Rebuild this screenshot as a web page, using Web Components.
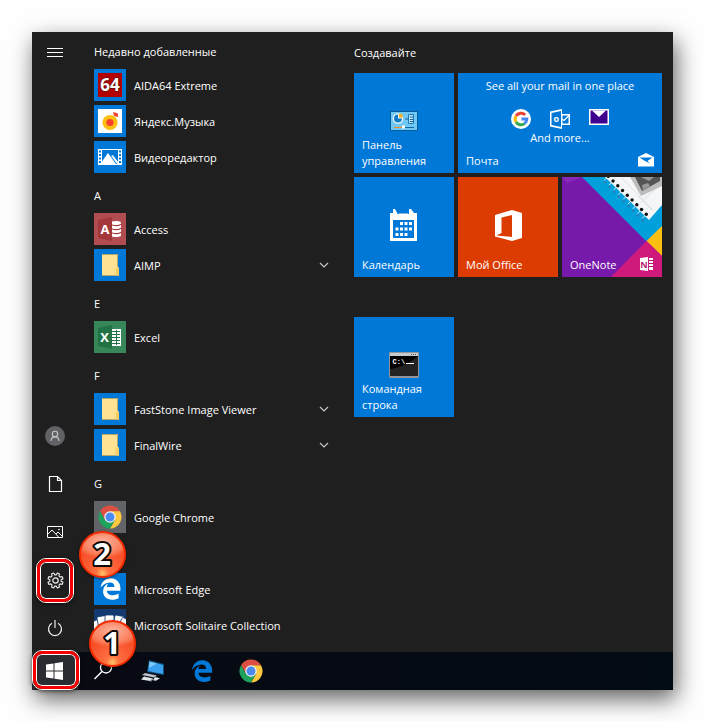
<!DOCTYPE html>
<html lang="ru">
<head>
<meta charset="utf-8">
<meta name="viewport" content="width=device-width, initial-scale=1">
<title>Меню «Пуск»</title>
<style>
  body { margin: 0; background: #fefefe; color: #fff; font: 11px/16px "Open Sans", "Noto Sans", sans-serif; }
</style>
</head>
<body>
<start-window>
  <nav-rail slot="rail">
    <rail-button icon="menu" label="Развернуть"></rail-button>
    <rail-button slot="bottom" icon="user" label="Учетная запись"></rail-button>
    <rail-button slot="bottom" icon="doc" label="Документы"></rail-button>
    <rail-button slot="bottom" icon="photo" label="Изображения"></rail-button>
    <rail-button slot="bottom" icon="gear" label="Параметры">
      <focus-frame class="gear"></focus-frame>
      <step-badge class="gear" value="2"></step-badge>
    </rail-button>
    <rail-button slot="bottom" icon="power" label="Выключение"></rail-button>
  </nav-rail>

  <app-list slot="apps">
    <list-heading>Недавно добавленные</list-heading>
    <app-row icon="aida">AIDA64 Extreme</app-row>
    <app-row icon="music">Яндекс.Музыка</app-row>
    <app-row icon="video">Видеоредактор</app-row>
    <list-heading>A</list-heading>
    <app-row icon="access">Access</app-row>
    <app-row icon="folder" group>AIMP</app-row>
    <list-heading>E</list-heading>
    <app-row icon="excel">Excel</app-row>
    <list-heading>F</list-heading>
    <app-row icon="folder" group>FastStone Image Viewer</app-row>
    <app-row icon="folder" group>FinalWire</app-row>
    <list-heading>G</list-heading>
    <app-row icon="chromeTile">Google Chrome</app-row>
    <list-heading></list-heading>
    <app-row icon="edgeTile">Microsoft Edge</app-row>
    <app-row icon="cards">Microsoft Solitaire Collection</app-row>
  </app-list>

  <tile-area slot="tiles">
    <tile-group heading="Создавайте">
      <start-tile icon="control">Панель<br>управления</start-tile>
      <mail-tile></mail-tile>
      <start-tile icon="calendar">Календарь</start-tile>
      <start-tile icon="office" class="orange">Мой Office</start-tile>
      <start-tile icon="onenoteArt" class="art">OneNote</start-tile>
    </tile-group>
    <tile-group>
      <start-tile icon="cmd">Командная<br>строка</start-tile>
    </tile-group>
  </tile-area>

  <task-bar slot="taskbar">
    <task-button icon="windows" label="Пуск" active>
      <focus-frame class="start"></focus-frame>
      <step-badge class="start" value="1"></step-badge>
    </task-button>
    <task-button icon="search" label="Поиск"></task-button>
    <task-button icon="computer" label="Компьютер"></task-button>
    <task-button icon="edge" label="Microsoft Edge"></task-button>
    <task-button icon="chrome" label="Google Chrome"></task-button>
  </task-bar>
</start-window>

<script>
const EDGE = 'M26 228C40.600 113 119 7.700 258.900 8c85 0 157.600 39.900 198.600 113.300 21 37.900 28.800 78.400 28.800 122.400v52H172.200c1.400 128.500 191.400 124.100 272.300 67.600v105.400c-47.400 28.500-156.800 53.200-240.200 21.300C133.700 462.900 84.400 389.500 83.600 318c-1.100-92.200 45.700-153.400 120.700-188.300-15.800 20-28 41.600-34.300 79h175.800c10.300-105-99.400-105-99.400-105C143.100 106.300 68.500 166.400 26 228z';

const gearPath = () => {
  const pts = [], n = 8;
  for (let i = 0; i < n; i++) {
    [[-14, 5.700], [-9, 7.700], [9, 7.700], [14, 5.700]].forEach(([d, r]) => {
      const a = (i * 45 + 22.500 + d) * Math.PI / 180;
      pts.push((8.500 + r * Math.cos(a)).toFixed(2) + ' ' + (8.500 + r * Math.sin(a)).toFixed(2));
    });
  }
  return 'M' + pts.join('L') + 'Z';
};

const chrome = (cx, cy, r) => {
  const p = (a, k) => (cx + k * r * Math.cos(a * Math.PI / 180)).toFixed(2) + ' ' + (cy + k * r * Math.sin(a * Math.PI / 180)).toFixed(2);
  return `<path fill="#dd4f43" d="M${p(210, 1)}A${r} ${r} 0 0 1 ${p(330, 1)}L${p(270, .5)}L${p(150, .5)}Z"/>
    <path fill="#fbc840" d="M${p(330, 1)}A${r} ${r} 0 0 1 ${p(90, 1)}L${p(30, .5)}L${p(270, .5)}Z"/>
    <path fill="#1fa25c" d="M${p(90, 1)}A${r} ${r} 0 0 1 ${p(210, 1)}L${p(150, .5)}L${p(30, .5)}Z"/>
    <circle cx="${cx}" cy="${cy}" r="${r * .5}" fill="#f2f2f2"/><circle cx="${cx}" cy="${cy}" r="${r * .39}" fill="#4a8af0"/>`;
};

/* Each entry: width, height, markup */
const ICONS = {
  menu: [17, 17, '<path d="M0 4.500h16M0 8.500h16M0 12.500h16" stroke="#fff"/>'],
  user: [20, 20, '<circle cx="10" cy="10" r="10" fill="#616265"/><g fill="none" stroke="#c8c8c8" stroke-width="1.100"><circle cx="10" cy="8" r="2.700"/><path d="M6 15c0-5.500 8-5.500 8 0"/></g>'],
  doc: [15, 18, '<path d="M1.500 1.500h8l4 4v11h-12zM9.500 1.500v4h4" fill="none" stroke="#fff" stroke-width="1.200"/>'],
  photo: [17, 13, '<path d="M.5.5h15v11H.5z" fill="none" stroke="#fff"/><path d="M1 8l4-4 7 7.500M9 8l2-2 4.500 4.500" fill="none" stroke="#fff"/><circle cx="12" cy="3.500" r=".8" fill="#fff"/>'],
  gear: [17, 17, `<path d="${gearPath()}" fill="none" stroke="#eee" stroke-width="1.100" stroke-linejoin="round"/><circle cx="8.500" cy="8.500" r="2.700" fill="none" stroke="#eee" stroke-width="1.200"/>`],
  power: [16, 17, '<path d="M5 3.300a6.500 6.500 0 1 0 6 0M8 0v8" fill="none" stroke="#eee" stroke-width="1.200"/>'],
  chevron: [12, 8, '<path d="M2 2l4 4 4-4" fill="none" stroke="#c4c4c4" stroke-width="1.200"/>'],
  aida: [32, 32, '<path fill="#0078d7" d="M0 0h32v32H0z"/><path fill="#b30000" d="M4 4h24v24H4z"/><text x="16" y="22" text-anchor="middle" font-family="Open Sans" font-size="17" font-weight="700" fill="#fff" stroke="#4a1010" stroke-width="1" paint-order="stroke">64</text>'],
  music: [32, 32, '<path fill="#0078d7" d="M0 0h32v32H0z"/><path fill="#fff" d="M4 4h24v24H4z"/><circle cx="16" cy="17.500" r="7.600" fill="#fdbf12"/><circle cx="16" cy="17.500" r="3.600" fill="#f8412e"/><path fill="#f8412e" d="M19 7l5 1.500v3.500l-4-1z"/>'],
  video: [32, 32, '<path fill="#0078d7" d="M0 0h32v32H0z"/><path fill="#fff" d="M4 8h24v16H4z"/><path fill="#0078d7" d="M8 9h16v14H8zM5 9.500h2v2H5zM5 13h2v2H5zM5 16.500h2v2H5zM5 20h2v2H5zM25 9.500h2v2h-2zM25 13h2v2h-2zM25 16.500h2v2h-2zM25 20h2v2h-2z"/><path fill="#fff" d="M8 20.500l6-8.500 8 11H8z"/><path d="M18 14.500l6 8" stroke="#fff" stroke-width="2"/>'],
  access: [32, 32, '<path fill="#b14d51" d="M0 0h32v32H0z"/><path fill="#a4373a" d="M4 7l14-3v24L4 25z"/><text x="11" y="21" text-anchor="middle" font-family="Open Sans" font-size="13" font-weight="700" fill="#fff">A</text><path fill="#fff" d="M18 8.500c3-1 9-.5 9 1v13c0 1.500-6 2-9 1z"/><path d="M18 12c4 1 8 .5 9-1M18 16c4 1 8 .5 9-1M18 20c4 1 8 .5 9-1" fill="none" stroke="#a4373a" stroke-width="1.200"/>'],
  excel: [32, 32, '<path fill="#38875b" d="M0 0h32v32H0z"/><path fill="#217346" d="M4 7l14-3v24L4 25z"/><text x="10.500" y="21" text-anchor="middle" font-family="Open Sans" font-size="13" font-weight="700" fill="#fff">X</text><path fill="#fff" d="M18 8h9v17h-9z"/><path fill="none" stroke="#217346" d="M18 10.500h8M18 13.500h8M18 16.500h8M18 19.500h8M18 22.500h8M22.500 9v15"/>'],
  folder: [32, 32, '<path fill="#0078d7" d="M0 0h32v32H0z"/><path fill="#ffe392" d="M8 5h16v13l1 1v7.500H8z"/><path d="M8 5.500h15.500v12M8 26.500h13" fill="none" stroke="#b5a66b"/><path fill="#f7cf62" d="M21.500 26.500v-6l2-2.500 1.500 1v7.500z"/>'],
  chromeTile: [32, 32, '<path fill="#626468" d="M0 0h32v32H0z"/>' + chrome(16, 16, 11.500)],
  edgeTile: [32, 32, `<path fill="#0078d7" d="M0 0h32v32H0z"/><path fill="#fff" transform="translate(5.500 5) scale(.043)" d="${EDGE}"/>`],
  cards: [32, 32, '<path fill="#123a70" d="M0 0h32v32H0z"/><g fill="#fff" stroke="#123a70" stroke-width=".8"><rect x="2" y="10" width="9" height="17" rx="1.500" transform="rotate(-24 8 26)"/><rect x="6" y="7" width="9" height="19" rx="1.500" transform="rotate(-10 10 26)"/><rect x="11" y="6" width="9" height="19" rx="1.500"/><rect x="17" y="6" width="9" height="19" rx="1.500" transform="rotate(12 20 26)"/><rect x="20" y="8" width="9" height="19" rx="1.500" transform="rotate(27 24 26)"/></g>'],
  control: [28, 20, '<path fill="#70c8f4" stroke="#0a5d95" d="M.5.5h27v19H.5z"/><circle cx="8" cy="7.500" r="5.300" fill="#f3f7fa"/><path fill="#0f7cc6" d="M8 3.500v4h4a4 4 0 1 1-4-4z"/><path fill="#f5ae22" d="M9 2.500a4 4 0 0 1 4 4H9z"/><path fill="#bde4f8" stroke="#1878b5" d="M18.500 3.500h5v9h-5z"/><path d="M15 8h4M20 6h3M20 8.500h3M20 10.500h3" stroke="#17679d"/><path d="M4 16.500h8" stroke="#ef8b22"/><path d="M15 16.500h9" stroke="#0f66a4"/><path fill="#fff" d="M12 14.500h3v3h-3z"/>'],
  calendar: [28, 32, '<path fill="#fff" d="M0 4h3V0l2 0 3 5.500 1-1h9l1 1V0h2l3 4h3v28H0z"/><path fill="#0078d7" d="M3 11h21v18H3z"/><path fill="#fff" d="M10 13h3v3h-3zM14.500 13h3v3h-3zM19 13h3v3h-3zM5.500 18.500h3v3h-3zM10 18.500h3v3h-3zM14.500 18.500h3v3h-3zM19 18.500h3v3h-3zM5.500 24h3v3h-3zM10 24h3v3h-3zM14.500 24h3v3h-3z"/>'],
  office: [27, 31, '<path fill="#fff" fill-rule="evenodd" d="M0 5L17 0 27 3v25L17 31 0 26.500V5zM6.500 7.500V23L1.500 25.500 17 27V5z"/>'],
  cmd: [30, 26, '<rect width="30" height="26" rx="1" fill="#8f959b"/><path fill="#c7cbd0" d="M1 1h28v3H1z"/><path stroke="#4f565d" stroke-dasharray="1 1" d="M22 2.500h6"/><path fill="#000" d="M1 4h28v20H1z"/><path fill="#2c2c2c" d="M1 17C10 16 21 11 29 4v20H1z" opacity=".8"/><text x="3.500" y="12" font-family="Liberation Mono" font-weight="700" font-size="7" fill="#fff">C:\\</text><path stroke="#fff" d="M17 11.500h8"/>'],
  google: [20, 20, '<circle cx="10" cy="10" r="10" fill="#fff"/><g fill="none" stroke-width="3"><path stroke="#ea4335" d="M5 7.100A5.800 5.800 0 0 1 14.200 6"/><path stroke="#fbbc05" d="M5 12.900a5.800 5.800 0 0 1 0-5.800"/><path stroke="#34a853" d="M13.500 14.600A5.800 5.800 0 0 1 5 12.900"/><path stroke="#4285f4" d="M10.500 10h5.300a5.800 5.800 0 0 1-2.300 4.600"/></g>'],
  outlook: [20, 20, '<path fill="#fff" fill-rule="evenodd" d="M0 2.500L12 0v5h8v11h-8v4L0 17.500z"/><path fill="#0078d7" d="M12.500 6.500h6v8h-6zM1.500 4L11 2v16l-9.500-2z"/><path d="M12 10l2 1.500 5-5" fill="none" stroke="#fff" stroke-width="1.300"/><text x="6.300" y="13" text-anchor="middle" font-family="Open Sans" font-size="9" font-weight="700" fill="#fff">o</text>'],
  purpleMail: [20, 16, '<path fill="#fff" d="M0 0h20v16H0z"/><path fill="#3f008f" d="M1.500 1.500h17v13h-17z"/><path fill="#fff" d="M3 1.500h14L10 8z"/>'],
  mail: [16, 14, '<path fill="#fff" d="M0 4l8-4 8 4v9.500H0z"/><path fill="#0078d7" d="M1.500 4.500h13L9.500 8l2.500 2.500L7 8z"/>'],
  onenote: [14, 14, '<path fill="#fff" d="M0 1l8-1v14l-8-1zM9 1h4v12H9z"/><text x="4" y="10.500" text-anchor="middle" font-family="Open Sans" font-size="9" font-weight="700" fill="#b5186f">N</text><path d="M9 3.500h5M9 6.500h5M9 9.500h5" stroke="#b5186f"/>'],
  onenoteArt: [100, 100, '<path fill="#7719aa" d="M0 0h100v100H0z"/><path fill="#8a27b8" d="M0 0h20L5 6z"/><path fill="#00a0dc" d="M20 0h80v52L84 64z"/><path fill="#fdbf12" d="M84.500 64L100 49v30z"/><path fill="#cf1a7b" d="M49 100l35.500-36L100 79v21z"/><path fill="#f5f6f7" d="M43 0h57v28L87 43z"/><path d="M59 0l32 33M76 19l14 14M78 26l22-20" stroke="#dde0e3" fill="none"/><path fill="#bcbcbc" d="M68 0h32v9L79 19z"/><path fill="#555" d="M73 0h25v4L80 14z"/><path fill="#999" d="M79 0l8 4 5-4zM80 8l6-2 2 3-7 4z"/>' + Array.from({ length: 9 }, (_, i) => { const x = 46.300 + i * 4.750, y = i * 4.750 - .7; return `<path d="M${x - 4} ${y + 4}l4-4" stroke="#e8eff5"/><path d="M${x - 4.500} ${y + 5.500}l2 1" stroke="#3179ad" stroke-width="2"/><circle cx="${x}" cy="${y}" r="1.700" fill="#111"/>`; }).join('')],
  windows: [18, 18, '<path fill="#fff" d="M0 2.500L7.500 1.500V8.500H0zM8.500 1.300L17 0v8.500H8.500zM0 9.500h7.500v7L0 15.500zM8.500 9.500H17V18l-8.500-1.300z"/>'],
  search: [20, 20, '<circle cx="12" cy="6.500" r="5.500" fill="none" stroke="#fff" stroke-width="1.300"/><path d="M8 10.500L.500 18" stroke="#fff" stroke-width="1.500"/>'],
  computer: [24, 22, '<path fill="#0d527f" d="M8 0l15 4v11L6 12z"/><path fill="#3aa0ee" d="M8.500 1.500L22 5v9L7 11z"/><path fill="#7bc8fa" d="M8.500 1.500L16 3.500 8 8z"/><path fill="#b8c1c8" d="M4 13l12 2.500-3 2L1 15z"/><path fill="#e0e5e8" d="M3 16.500l9 2-3 2.500-9-1.500zM14 17l5 1.300-4 2.500-3-.5z"/><path fill="#8e999f" d="M9 21l3-2.500v1L9.500 22z"/>'],
  edge: [22, 22, `<path fill="#0078d7" transform="scale(.0435)" d="${EDGE}"/>`],
  chrome: [24, 24, chrome(12, 12, 11.500)]
};

function define(name, template) {
  customElements.define(name, class extends HTMLElement {
    constructor() {
      super();
      const root = this.attachShadow({ mode: 'open' });
      const t = document.createElement('template');
      t.innerHTML = typeof template === 'function' ? template(this) : template;
      root.append(t.content.cloneNode(true));
    }
  });
}

const BUTTON = 'button{font:inherit;color:inherit;background:none;border:0;padding:0;margin:0;text-align:left;cursor:pointer}button:focus-visible{outline:2px solid #fff}';

define('ui-icon', el => {
  const [w, h, body] = ICONS[el.getAttribute('name')];
  return `<style>:host{display:block;flex:none}svg{display:block}</style><svg width="${w}" height="${h}" viewBox="0 0 ${w} ${h}" aria-hidden="true">${body}</svg>`;
});

define('start-window', `<style>
  :host{display:block;margin:32px;background:#1f1f1f;box-shadow:3px 9px 22px rgba(0,0,0,.62)}
  .menu{display:grid;grid-template-columns:46px 276px minmax(0,1fr)}
  </style><main class="menu"><slot name="rail"></slot><slot name="apps"></slot><slot name="tiles"></slot></main><slot name="taskbar"></slot>`);

define('nav-rail', `<style>
  :host{display:block}nav{display:flex;flex-direction:column;justify-content:space-between;height:100%}
  </style><nav><div><slot></slot></div><div><slot name="bottom"></slot></div></nav>`);

define('rail-button', el => `<style>${BUTTON}
  :host{display:block;position:relative}button{display:grid;place-items:center;width:100%;height:${el.getAttribute('icon') === 'menu' ? 40 : 48}px}
  </style><button type="button" aria-label="${el.getAttribute('label')}"><ui-icon name="${el.getAttribute('icon')}"></ui-icon></button><slot></slot>`);

define('app-list', `<style>:host{display:block;padding:0 24px 9px 16px}::slotted(list-heading:first-child){height:35px;padding-top:4px}</style><slot></slot>`);

define('list-heading', `<style>
  :host{display:flex;align-items:center;height:36px;box-sizing:border-box;padding-top:6px}h2{font:inherit;margin:0}
  </style><h2><slot></slot></h2>`);

define('app-row', el => `<style>${BUTTON}
  :host{display:block}button{display:flex;align-items:center;gap:8px;width:100%;height:36px}span{flex:1;padding-top:2px}
  </style><button type="button"><ui-icon name="${el.getAttribute('icon')}"></ui-icon><span><slot></slot></span>${el.hasAttribute('group') ? '<ui-icon name="chevron"></ui-icon>' : ''}</button>`);

define('tile-area', `<style>:host{display:flex;flex-direction:column;gap:40px;padding:12px 11px 0 0}</style><slot></slot>`);

define('tile-group', el => `<style>
  :host{display:block}h2{font:inherit;margin:0 0 12px;padding-top:1px}
  .grid{display:grid;grid-template-columns:repeat(auto-fill,100px);grid-auto-rows:100px;gap:4px}
  ::slotted(mail-tile){grid-column:span 2}
  </style>${el.hasAttribute('heading') ? `<h2>${el.getAttribute('heading')}</h2>` : ''}<div class="grid"><slot></slot></div>`);

define('start-tile', el => `<style>${BUTTON}
  :host{display:block;background:#0078d7}:host(.orange){background:#dc3c00}
  button{display:grid;grid-template:100%/100%;width:100%;height:100%}
  button>*{grid-area:1/1}
  .icon{place-self:center;margin-bottom:4px}:host(.art) .icon{margin:0}
  .label{align-self:end;display:flex;justify-content:space-between;padding:0 8px 4px}
  </style><button type="button"><ui-icon class="icon" name="${el.getAttribute('icon')}"></ui-icon><span class="label"><span><slot></slot></span>${el.classList.contains('art') ? '<ui-icon name="onenote"></ui-icon>' : ''}</span></button>`);

define('mail-tile', `<style>${BUTTON}
  :host{display:block;background:#0078d7}
  button{display:flex;flex-direction:column;width:100%;height:100%;padding:5px 8px 4px}
  .line{text-align:center;align-self:center}
  .icons{display:flex;justify-content:center;align-self:center;gap:19px;margin-top:15px;height:21px}
  .foot{display:flex;justify-content:space-between;align-self:stretch;margin-top:auto}
  </style><button type="button"><span class="line">See all your mail in one place</span>
  <span class="icons"><ui-icon name="google"></ui-icon><ui-icon name="outlook"></ui-icon><ui-icon name="purpleMail"></ui-icon></span>
  <span class="line">And more...</span><span class="foot"><span>Почта</span><ui-icon name="mail"></ui-icon></span></button>`);

define('task-bar', `<style>:host{display:flex;background:linear-gradient(90deg,#080a12,#030b13);height:38px}</style><slot></slot>`);

define('task-button', el => `<style>${BUTTON}
  :host{display:block;position:relative;width:49px}:host([active]){width:46px;background:#292c31;margin-right:1px}
  button{display:grid;place-items:center;width:100%;height:100%}
  </style><button type="button" aria-label="${el.getAttribute('label')}"><ui-icon name="${el.getAttribute('icon')}"></ui-icon></button><slot></slot>`);

define('focus-frame', `<style>
  :host{position:absolute;pointer-events:none;box-sizing:border-box;border:1px solid #fff;border-radius:10px;background:none;box-shadow:0 1px 4px rgba(0,0,0,.6)}
  :host(.gear){inset:2px 4px 1px}:host(.start){inset:-2px -2px 0 0}
  div{height:100%;box-sizing:border-box;border:3px solid #f50000;border-radius:9px;box-shadow:inset 0 0 0 1px #fff}
  </style><div></div>`);

define('step-badge', el => `<style>
  :host{position:absolute;z-index:5;box-sizing:border-box;width:47px;height:47px;border-radius:50%;border:2px solid #f32a00;
    background:radial-gradient(ellipse 70% 38% at 50% 20%,rgba(255,215,200,.75) 0,rgba(255,170,140,.5) 75%,rgba(255,140,110,0) 100%),radial-gradient(circle at 50% 94%,#ffc466 0,#ff7040 14%,#fa5a33 40%,#ef3a10 100%);
    box-shadow:0 1px 3px rgba(0,0,0,.5);pointer-events:none}
  :host(.gear){left:47px;top:-25px}:host(.start){left:57px;top:-32px}
  svg{display:block}
  text{font:700 31px "Open Sans",sans-serif;fill:#fff;stroke:#100804;stroke-width:4px;stroke-linejoin:round;paint-order:stroke}
  </style><svg width="43" height="43" viewBox="0 0 43 43"><text x="21" y="32" text-anchor="middle">${el.getAttribute('value')}</text></svg>`);
</script>
</body>
</html>
